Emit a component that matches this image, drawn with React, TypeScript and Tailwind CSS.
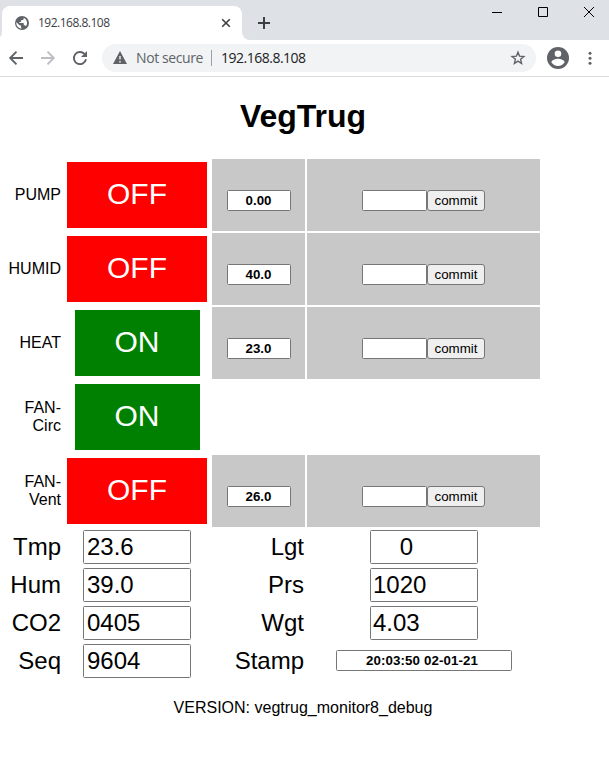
type Control = { label: string; on: boolean; value?: string };

const controls: Control[] = [
  { label: "PUMP", on: false, value: "0.00" },
  { label: "HUMID", on: false, value: "40.0" },
  { label: "HEAT", on: true, value: "23.0" },
  { label: "FAN-Circ", on: true },
  { label: "FAN-Vent", on: false, value: "26.0" },
];

const sensors = [
  ["Tmp", "23.6", "Lgt", "    0"],
  ["Hum", "39.0", "Prs", "1020"],
  ["CO2", "0405", "Wgt", "4.03"],
  ["Seq", "9604", "Stamp", "20:03:50 02-01-21"],
];

function TabStrip() {
  return (
    <div className="flex h-10 bg-[#dee1e6] pt-1.5 pl-0.5">
      <div className="relative flex h-[34px] w-[240px] items-center rounded-t-lg bg-white pr-[11px] pl-[13px]">
        <svg className="absolute bottom-0 -left-2 size-2" viewBox="0 0 8 8"><path d="M8 0v8H0a8 8 0 0 0 8-8" fill="#fff" /></svg>
        <svg className="absolute -right-2 bottom-0 size-2" viewBox="0 0 8 8"><path d="M0 0v8h8a8 8 0 0 1-8-8" fill="#fff" /></svg>
        <svg className="size-[14px]" viewBox="0 0 14 14">
          <circle cx="7" cy="7" r="7" fill="#5f6368" />
          <path d="M1.500 6.200l3 3c.3.300 1 .300 1.500.300v1.500c0 .800.700 1 .700 1.500-3 0-5.400-2.500-5.400-5.500 0-.3.100-.500.200-.8zM8.700 1.700v1c0 .700-.600 1.300-1.300 1.300H6.200v1.200c0 .4-.300.700-.700.700H4.400v1.100h3.700c.400 0 .700.300.700.700v1.500h.8c.6 0 1.100.400 1.300 1a5.500 5.500 0 0 0-2.200-8.500z" fill="#fff" />
        </svg>
        <span className="ml-[9px] flex-1 font-['Open_Sans',sans-serif] text-[12px] leading-4 tracking-[-0.5px] text-[#3c4043]">192.168.8.108</span>
        <svg className="size-[10px]" viewBox="0 0 10 10" stroke="#3c4043" strokeWidth="1.6"><path d="M1.200 1.200l7.600 7.600M8.800 1.200L1.200 8.800" /></svg>
      </div>
      <svg className="mt-[11px] ml-4 size-3" viewBox="0 0 12 12" stroke="#3c4043" strokeWidth="2"><path d="M6 0v12M0 6h12" /></svg>
      <div className="mr-[15px] ml-auto flex gap-9">
        <svg className="size-[10px]" viewBox="0 0 10 10"><path d="M0 6h10v1H0z" fill="#000" /></svg>
        <svg className="mt-[1px] size-[10px]" viewBox="0 0 10 10" fill="none" stroke="#000"><path d="M.5.5h9v9h-9z" /></svg>
        <svg className="mt-[1px] size-[10px]" viewBox="0 0 10 10" stroke="#000"><path d="M0 0l10 10M10 0L0 10" /></svg>
      </div>
    </div>
  );
}

function Toolbar() {
  return (
    <div className="flex h-[37px] items-center border-b border-[#dadce0] bg-white pl-2 font-['Open_Sans',sans-serif] text-sm">
      <svg className="size-4" viewBox="0 0 16 16" fill="none" stroke="#5f6368" strokeWidth="1.9"><path d="M15 8H2.500M8.500 1.700L2.200 8l6.300 6.300" /></svg>
      <svg className="ml-4 size-4" viewBox="0 0 16 16" fill="none" stroke="#bcbec1" strokeWidth="1.9"><path d="M1 8h12.500M7.500 1.700L13.800 8l-6.300 6.300" /></svg>
      <svg className="ml-4 size-4" viewBox="0 0 16 16" fill="none" stroke="#5f6368" strokeWidth="1.9"><path d="M14 9.200A6.100 6.100 0 1 1 12.500 3.900" /><path d="M15 1v6H9z" fill="#5f6368" stroke="none" /></svg>
      <div className="ml-[14px] flex h-7 w-[434px] items-center rounded-full bg-[#f1f3f4] pr-2.5 pl-[11px]">
        <svg className="size-[14px]" viewBox="0 0 14 14"><path d="M7 0l7 13H0z" fill="#5f6368" /><path d="M6.300 5h1.400v3.500H6.300zM6.300 10h1.400v1.400H6.300z" fill="#f1f3f4" /></svg>
        <span className="ml-[9px] w-[67px] whitespace-nowrap tracking-[-0.4px] text-[#5f6368]">Not secure</span>
        <div className="ml-2 h-4 w-px bg-[#9aa0a6]" />
        <span className="ml-[9px] flex-1 tracking-[-0.5px] text-[#202124]">192.168.8.108</span>
        <svg className="size-4" viewBox="0 0 16 16" fill="none" stroke="#5f6368" strokeWidth="1.400"><path d="M8 2.200l1.600 4 4.300.3-3.300 2.800 1 4.200L8 11.200l-3.600 2.300 1-4.200-3.300-2.800 4.300-.3z" /></svg>
      </div>
      <svg className="ml-[11px] size-[22px]" viewBox="0 0 22 22"><circle cx="11" cy="11" r="11" fill="#5f6368" /><circle cx="11" cy="6.700" r="3.300" fill="#fff" /><path d="M4.400 15.300c0-2.300 4.400-3.500 6.600-3.500s6.600 1.200 6.600 3.500c-1.400 2.300-3.800 3.800-6.600 3.800s-5.200-1.500-6.600-3.800z" fill="#fff" /></svg>
      <svg className="ml-[13px] size-4 shrink-0" viewBox="0 0 16 16" fill="#5f6368"><circle cx="8" cy="3.200" r="1.500" /><circle cx="8" cy="8.200" r="1.500" /><circle cx="8" cy="13.200" r="1.500" /></svg>
    </div>
  );
}

const field = "block rounded-[1.5px] border border-[#767676] bg-white text-black";

function ControlRow({ label, on, value }: Control) {
  return (
    <div className="grid h-[72px] grid-cols-[61px_142px_93px_233px] gap-x-[2px]">
      <div className="flex items-center justify-end text-right leading-[18px]">
        <span className={value && label !== "FAN-Vent" ? "" : "w-10"}>{label}</span>
      </div>
      <div className="flex items-center justify-center pl-[6px]">
        <button className={`h-[66px] shrink-0 pb-[2px] text-[30px] leading-[34px] text-white ${on ? "w-[125px] bg-[#008000]" : "mr-[1px] w-[140px] bg-[#ff0000] pl-[1px]"}`}>{on ? "ON" : "OFF"}</button>
      </div>
      {value && (
        <>
          <div className="ml-[5px] flex w-[93px] items-center justify-center bg-[#c8c8c8] pt-[11px]">
            <input readOnly value={value} className={`${field} h-[21px] w-16 text-center text-[13.333px] font-bold`} />
          </div>
          <div className="ml-[5px] flex w-[233px] items-center justify-center bg-[#c8c8c8] pt-[11px]">
            <input className={`${field} h-[21px] w-[65px]`} />
            <button className="h-[21px] w-[58px] rounded-[3px] border border-[#767676] bg-[#efefef] text-[13.333px] leading-[19px]">commit</button>
          </div>
        </>
      )}
    </div>
  );
}

export default function App() {
  return (
    <div className="h-[764px] w-[609px] overflow-hidden bg-white font-['Liberation_Sans',Arial,sans-serif] text-base text-black">
      <TabStrip />
      <Toolbar />
      <h1 className="mt-[21px] w-[606px] text-center text-[32px] leading-9 font-bold">VegTrug</h1>
      <div className="mt-[25px] flex flex-col gap-[2px]">
        {controls.map((c) => <ControlRow key={c.label} {...c} />)}
      </div>
      <div className="mt-[3px] flex flex-col gap-1">
        {sensors.map(([a, av, b, bv]) => (
          <div key={a} className="flex h-[34px] items-center text-2xl leading-7">
            <span className="w-[61px] text-right">{a}</span>
            <input readOnly value={av} className={`${field} ml-[22px] h-[34px] w-[108px] px-[3px]`} />
            <span className="w-[113px] text-right">{b}</span>
            <div className="ml-[3px] flex w-[233px] justify-center">
              {b === "Stamp" ? (
                <input readOnly value={bv} className={`${field} mb-[1px] ml-[1px] h-[21px] w-[176px] pr-[4px] text-center text-[13.333px] leading-4 font-bold tracking-[0.1px]`} />
              ) : (
                <input readOnly value={bv} className={`${field} ml-[1px] h-[34px] w-[108px] px-[2px]`} />
              )}
            </div>
          </div>
        ))}
      </div>
      <p className="mt-[21px] w-[606px] text-center leading-[18px]">VERSION: vegtrug_monitor8_debug</p>
    </div>
  );
}
